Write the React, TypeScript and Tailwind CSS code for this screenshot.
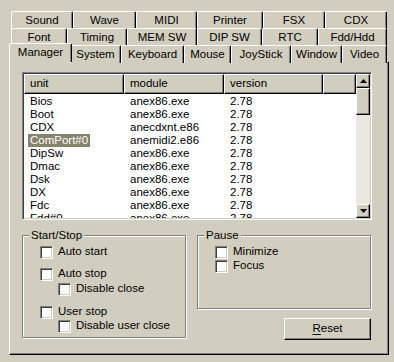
import React from 'react';

// Win classic palette (slightly warm face colour)
// face #d2cebf, shadow #808080, dark #404040

interface TabProps {
  label: string;
  w: string;
  selected?: boolean;
}

const Tab: React.FC<TabProps> = ({ label, w, selected }) => {
  if (selected) {
    return (
      <div
        className={`${w} relative z-10 -ml-[2px] -mr-[2px] -mt-[2px] h-[19px] shrink-0 rounded-t-[2px] border-t border-l border-r border-t-white border-l-white border-r-black bg-[#d2cebf] shadow-[inset_-1px_0_0_#808080] flex items-center justify-center pb-[1px]`}
      >
        {label}
      </div>
    );
  }
  return (
    <div
      className={`${w} h-[18px] shrink-0 rounded-t-[2px] border-t border-l border-r border-t-white border-l-white border-r-black bg-[#d2cebf] shadow-[inset_-1px_0_0_#808080] flex items-center justify-center`}
    >
      {label}
    </div>
  );
};

const Check: React.FC<{ label: string; className?: string }> = ({ label, className }) => (
  <div className={`flex items-center h-[13px] gap-[5px] ${className ?? ''}`}>
    <span className="w-[13px] h-[13px] shrink-0 bg-white border-t border-l border-t-[#808080] border-l-[#808080] border-r border-b border-r-white border-b-white shadow-[inset_1px_1px_0_#404040,inset_-1px_-1px_0_#d2cebf]" />
    <span className="leading-[13px] mb-[3px] whitespace-nowrap">{label}</span>
  </div>
);

const GroupBox: React.FC<{ title: string; className: string; children?: React.ReactNode }> = ({
  title,
  className,
  children,
}) => (
  <div
    className={`relative border border-[#808080] shadow-[1px_1px_0_#ffffff,inset_1px_1px_0_#ffffff] ${className}`}
  >
    <span className="absolute left-[6px] -top-[8px] px-[2px] bg-[#d2cebf] leading-[14px]">{title}</span>
    {children}
  </div>
);

const Raised = 'border-t border-l border-t-white border-l-white border-r border-b border-r-black border-b-black shadow-[inset_-1px_-1px_0_#808080] bg-[#d2cebf]';

const rows: [string, string][] = [
  ['Bios', 'anex86.exe'],
  ['Boot', 'anex86.exe'],
  ['CDX', 'anecdxnt.e86'],
  ['ComPort#0', 'anemidi2.e86'],
  ['DipSw', 'anex86.exe'],
  ['Dmac', 'anex86.exe'],
  ['Dsk', 'anex86.exe'],
  ['DX', 'anex86.exe'],
  ['Fdc', 'anex86.exe'],
  ['Fdd#0', 'anex86.exe'],
];

export default function App() {
  return (
    <div className="w-[394px] h-[362px] bg-[#d2cebf] pl-[9px] pt-[11px] text-[11.5px] text-black font-['Liberation_Sans',Arial,sans-serif] overflow-hidden select-none">
      {/* tab rows */}
      <div className="flex h-[17px] pl-[2px]">
        <Tab label="Sound" w="w-[62px]" />
        <Tab label="Wave" w="w-[63px]" />
        <Tab label="MIDI" w="w-[61px]" />
        <Tab label="Printer" w="w-[66px]" />
        <Tab label="FSX" w="w-[62px]" />
        <Tab label="CDX" w="w-[62px]" />
      </div>
      <div className="flex h-[17px] pl-[2px]">
        <Tab label="Font" w="w-[56px]" />
        <Tab label="Timing" w="w-[60px]" />
        <Tab label="MEM SW" w="w-[70px]" />
        <Tab label="DIP SW" w="w-[65px]" />
        <Tab label="RTC" w="w-[56px]" />
        <Tab label="Fdd/Hdd" w="w-[69px]" />
      </div>
      <div className="flex h-[16px] pl-[2px] items-start">
        <Tab label="Manager" w="w-[63px]" selected />
        <Tab label="System" w="w-[51px]" />
        <Tab label="Keyboard" w="w-[63px]" />
        <Tab label="Mouse" w="w-[47px]" />
        <Tab label="JoyStick" w="w-[60px]" />
        <Tab label="Window" w="w-[51px]" />
        <Tab label="Video" w="w-[45px]" />
      </div>

      {/* page */}
      <div className="w-[380px] h-[294px] border-t border-l border-t-white border-l-white border-r border-b border-r-black border-b-black shadow-[inset_-1px_-1px_0_#808080] pl-[12px] pt-[10px]">
        {/* list view */}
        <div className="w-[350px] h-[148px] flex border-t border-l border-t-[#808080] border-l-[#808080] border-r border-b border-r-white border-b-white shadow-[inset_1px_1px_0_#404040,inset_-1px_-1px_0_#d2cebf] p-[1px] bg-white">
          <div className="w-[332px] flex flex-col overflow-hidden">
            <div className="flex h-[20px] shrink-0">
              <div className={`w-[100px] ${Raised} flex items-center pl-[5px]`}>unit</div>
              <div className={`w-[100px] ${Raised} flex items-center pl-[5px]`}>module</div>
              <div className={`w-[99px] ${Raised} flex items-center pl-[5px]`}>version</div>
              <div className={`w-[33px] ${Raised}`} />
            </div>
            <div className="pt-[1px]">
              {rows.map(([unit, mod]) => {
                const sel = unit === 'ComPort#0';
                return (
                  <div key={unit} className="flex h-[13px] leading-[13px] whitespace-nowrap">
                    <div className="w-[100px] pl-[4px]">
                      <span className={sel ? 'px-[2px] inline-block h-[13px] bg-[#85836c] text-white' : 'px-[2px]'}>
                        {unit}
                      </span>
                    </div>
                    <div className="w-[100px] pl-[6px]">{mod}</div>
                    <div className="w-[99px] pl-[6px]">2.78</div>
                  </div>
                );
              })}
            </div>
          </div>
          {/* scrollbar */}
          <div className="w-[14px] flex flex-col bg-[#e9e7de]">
            <div className={`h-[14px] ${Raised} flex items-center justify-center`}>
              <svg width="7" height="4" viewBox="0 0 7 4">
                <polygon points="3.5,0 7,4 0,4" fill="#000" />
              </svg>
            </div>
            <div className={`h-[27px] ${Raised}`} />
            <div className="flex-1" />
            <div className={`h-[14px] ${Raised} flex items-center justify-center`}>
              <svg width="7" height="4" viewBox="0 0 7 4">
                <polygon points="0,0 7,0 3.5,4" fill="#000" />
              </svg>
            </div>
          </div>
        </div>

        {/* lower area */}
        <div className="flex gap-[11px] mt-[15px]">
          <GroupBox title="Start/Stop" className="w-[164px] h-[103px] pl-[17px] pt-[10px]">
            <Check label="Auto start" />
            <Check label="Auto stop" className="mt-[9px]" />
            <Check label="Disable close" className="mt-[2px] ml-[18px]" />
            <Check label="User stop" className="mt-[10px]" />
            <Check label="Disable user close" className="mt-[1px] ml-[18px]" />
          </GroupBox>
          <div className="w-[174px] flex flex-col">
            <GroupBox title="Pause" className="w-[174px] h-[74px] pl-[17px] pt-[10px]">
              <Check label="Minimize" />
              <Check label="Focus" className="mt-[1px]" />
            </GroupBox>
            <button
              className={`mt-[9px] self-end w-[87px] h-[22px] ${Raised} flex items-center justify-center pb-[1px]`}
            >
              <span>
                <span className="underline underline-offset-2">R</span>eset
              </span>
            </button>
          </div>
        </div>
      </div>
    </div>
  );
}
